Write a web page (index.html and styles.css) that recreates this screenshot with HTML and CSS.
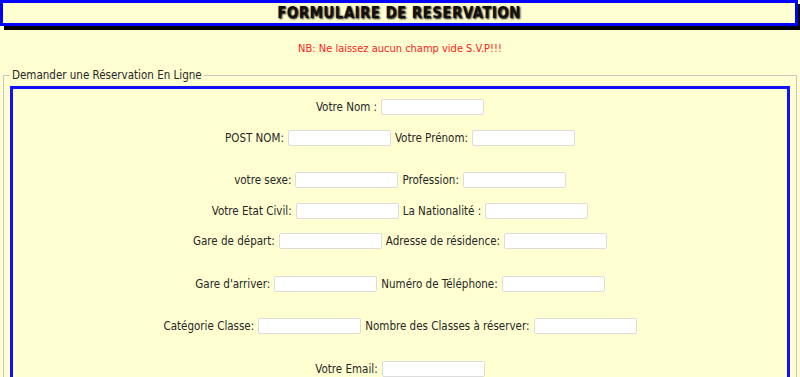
FILE: index.html
```html
<!DOCTYPE html>
<html lang="fr">
<head>
  <meta charset="UTF-8">
  <title>Formulaire de réservation</title>
  <link rel="stylesheet" href="styles.css">
</head>
<body>

<h1 class="titre">FORMULAIRE DE RESERVATION</h1>

<p class="nb">NB: Ne laissez aucun champ vide S.V.P!!!</p>

<form>
  <fieldset>
    <legend>Demander une Réservation En Ligne</legend>
    <div class="cadre">
      <div class="ligne premiere">
        <label>Votre Nom :</label>
        <input type="text" name="nom">
      </div>
      <div class="ligne">
        <label>POST NOM:</label>
        <input type="text" name="postnom">
        <label>Votre Prénom:</label>
        <input type="text" name="prenom">
      </div>
      <div class="ligne large">
        <label>votre sexe:</label>
        <input type="text" name="sexe">
        <label>Profession:</label>
        <input type="text" name="profession">
      </div>
      <div class="ligne">
        <label>Votre Etat Civil:</label>
        <input type="text" name="etatcivil">
        <label>La Nationalité :</label>
        <input type="text" name="nationalite">
      </div>
      <div class="ligne">
        <label>Gare de départ:</label>
        <input type="text" name="depart">
        <label>Adresse de résidence:</label>
        <input type="text" name="adresse">
      </div>
      <div class="ligne large">
        <label>Gare d'arriver:</label>
        <input type="text" name="arrivee">
        <label>Numéro de Téléphone:</label>
        <input type="text" name="telephone">
      </div>
      <div class="ligne large">
        <label>Catégorie Classe:</label>
        <input type="text" name="categorie">
        <label>Nombre des Classes à réserver:</label>
        <input type="text" name="nombre">
      </div>
      <div class="ligne large">
        <label>Votre Email:</label>
        <input type="text" name="email">
      </div>
    </div>
  </fieldset>
</form>

</body>
</html>
```

FILE: styles.css
```css
body {
  margin: 0;
  background-color: #ffffd2;
  font-family: "DejaVu Sans Condensed", "DejaVu Sans", sans-serif;
  font-size: 11.5px;
  color: #262626;
}
.titre {
  margin: 0 2px 0 0;
  height: 20px;
  border: 3px solid #0000ff;
  box-shadow: 4px 4px 0 #000;
  text-align: center;
  font-family: "DejaVu Sans Condensed", sans-serif;
  font-weight: bold;
  font-size: 15px;
  letter-spacing: 0.4px;
  line-height: 20px;
  color: #111;
  text-shadow: 1px 1px 2px #000;
}
.nb {
  margin: 16px 0 0;
  text-align: center;
  color: #ff2020;
  font-size: 11px;
}
form {
  margin: 13px 3px 0 3px;
}
fieldset {
  margin: 0;
  padding: 4px 6px 0 6px;
  border: 1px solid #c8c8c0;
  border-bottom: none;
}
legend {
  padding: 0 2px;
  margin-left: 0;
}
.cadre {
  border: 3px solid #1010ff;
  border-bottom: none;
  padding: 10px 0 4px;
}
.ligne {
  display: flex;
  justify-content: center;
  align-items: center;
  gap: 4px;
  margin-top: 14.5px;
}
.ligne.premiere {
  margin-top: 0;
}
.ligne.large {
  margin-top: 26.5px;
}
input {
  width: 103px;
  height: 16px;
  padding: 0 2px;
  box-sizing: border-box;
  border: 1px solid #dcdcdc;
  border-radius: 2px;
  background: #fff;
  font-size: 11px;
}
```
